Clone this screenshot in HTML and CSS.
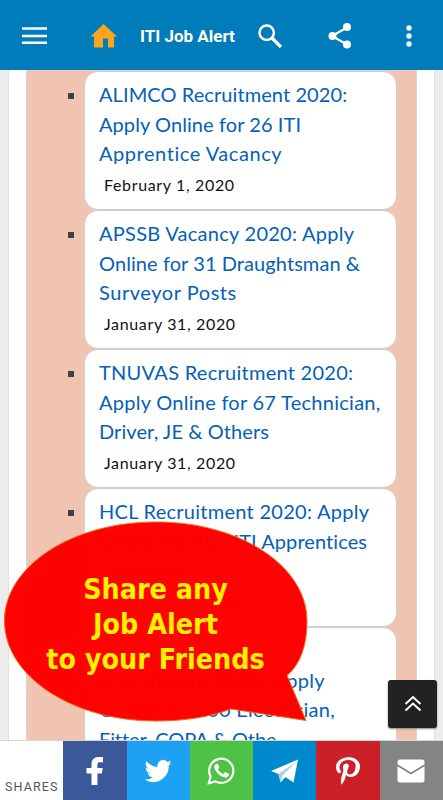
FILE: index.html
```html
<!DOCTYPE html>
<html lang="en">
<head>
    <meta charset="UTF-8">
    <meta name="viewport" content="width=device-width, initial-scale=1.0">
    <title>ITI Job Alert</title>
    <link rel="stylesheet" href="styles.css">
</head>
<body>
    <header class="topbar">
        <svg class="icon-menu" width="26" height="18" viewBox="0 0 26 18"><path d="M0 1.5h25M0 9h25M0 15.7h25" stroke="#fff" stroke-width="2.6"/></svg>
        <svg class="icon-home" width="28" height="24" viewBox="0 0 28 24"><path d="M13.500 0L27 12.5h-3V23.5h-6V14.500h-5V23.5H4V12.5H.5z" fill="#faa51e"/></svg>
        <h1>ITI Job Alert</h1>
        <svg class="icon-search" width="25" height="25" viewBox="0 0 25 25"><circle cx="8.700" cy="8.700" r="7.200" fill="none" stroke="#fff" stroke-width="2.500"/><path d="M14 14L23 23" stroke="#fff" stroke-width="3.2"/></svg>
        <svg class="icon-share" width="24" height="26" viewBox="0 0 24 26"><path d="M19 4.5L4 13l15 8.5" fill="none" stroke="#fff" stroke-width="2.2"/><circle cx="19" cy="4" r="4" fill="#fff"/><circle cx="4.500" cy="13" r="4" fill="#fff"/><circle cx="19" cy="21.5" r="4" fill="#fff"/></svg>
        <svg class="icon-more" width="6" height="22" viewBox="0 0 6 22"><circle cx="3" cy="3" r="2.7" fill="#fff"/><circle cx="3" cy="11" r="2.7" fill="#fff"/><circle cx="3" cy="19" r="2.7" fill="#fff"/></svg>
    </header>

    <main class="page">
        <ul class="jobs">
            <li>
                <a href="#"><span>ALIMCO Recruitment 2020:</span><span>Apply Online for 26 ITI</span><span class="loose">Apprentice Vacancy</span></a>
                <time>February 1, 2020</time>
            </li>
            <li>
                <a href="#"><span class="wide">APSSB Vacancy 2020: Apply</span><span>Online for 31 Draughtsman &amp;</span><span class="loose">Surveyor Posts</span></a>
                <time>January 31, 2020</time>
            </li>
            <li>
                <a href="#"><span class="wide">TNUVAS Recruitment 2020:</span><span class="wide">Apply Online for 67 Technician,</span><span>Driver, JE &amp; Others</span></a>
                <time>January 31, 2020</time>
            </li>
            <li>
                <a href="#"><span class="wide">HCL Recruitment 2020: Apply</span><span>Online for 103 ITI Apprentices</span><span>Vacancies</span></a>
                <time>January 30, 2020</time>
            </li>
            <li>
                <a href="#"><span>Western Railway</span><span class="wide">Recruitment 2020: Apply</span><span class="wide">Online for 200 Electrician,</span><span class="tight">Fitter, COPA &amp; Othe</span></a>
            </li>
        </ul>
    </main>

    <div class="bubble">
        <svg width="306" height="202" viewBox="0 0 306 202"><path d="M152 1C236 1 303 45 303 100C303 123 297 143 283 154.500L302 199.500L227 188C205 196 181 200 152 200C68 200 .5 155 .5 100C.5 45 68 1 152 1Z" fill="#f00" stroke="#f36a12" stroke-width="1"/></svg>
        <p><span>Share any</span><span>Job Alert</span><span>to your Friends</span></p>
    </div>

    <button class="to-top"><svg width="18" height="18" viewBox="0 0 18 18"><path d="M1.500 9L9 2l7.500 7M1.500 15.500L9 8.500l7.500 7" fill="none" stroke="#fff" stroke-width="2"/></svg></button>

    <footer class="sharebar">
        <span class="shares">SHARES</span>
        <a class="facebook" href="#"><svg width="30" height="30" viewBox="0 0 30 30"><path d="M11.500 29V17.500H6.500V12h5V8.500c0-5 2.800-7.500 7.300-7.500H23v5.200h-3c-2 0-2.600.8-2.600 2.500V12H22.700l-.8 5.500h-4.500V29z" fill="#fff"/></svg></a>
        <a class="twitter" href="#"><svg width="28" height="28" viewBox="0 0 24 24"><path d="M23.600 4.900c-.8.400-1.700.7-2.700.8 1-.6 1.700-1.500 2-2.600-.9.500-1.900.9-3 1.100a4.700 4.700 0 0 0-8.100 4.300C7.900 8.300 4.400 6.400 2.100 3.600a4.700 4.700 0 0 0 1.500 6.300c-.8 0-1.500-.2-2.100-.6v.1c0 2.300 1.600 4.200 3.800 4.600-.7.200-1.400.2-2.100.1.600 1.900 2.300 3.200 4.400 3.300A9.500 9.500 0 0 1 .6 19.300a13.400 13.400 0 0 0 20.600-11.900c.9-.7 1.700-1.500 2.400-2.500z" fill="#fff"/></svg></a>
        <a class="whatsapp" href="#"><svg width="29" height="29" viewBox="0 0 24 24"><path d="M17.500 14.400c-.3-.1-1.800-.9-2-1-.3-.1-.5-.1-.7.200-.2.300-.8 1-.9 1.100-.2.200-.3.200-.6.100-.3-.2-1.300-.5-2.400-1.500-.9-.8-1.500-1.800-1.700-2.100-.2-.3 0-.5.100-.6l.5-.5c.1-.2.200-.3.300-.5.100-.2 0-.4 0-.5-.1-.2-.7-1.700-.9-2.200-.2-.6-.5-.5-.7-.5h-.6c-.2 0-.5.100-.8.400-.3.300-1 1-1 2.500s1.100 2.900 1.200 3.100c.2.200 2.100 3.200 5.100 4.500 3 1.200 3 .8 3.600.8.500-.1 1.700-.7 2-1.400.3-.7.300-1.300.2-1.400-.1-.2-.3-.3-.7-.5z" fill="#fff"/><path d="M1.500 22.500L3 17A10 10 0 1 1 7 21z" fill="none" stroke="#fff" stroke-width="1.800"/></svg></a>
        <a class="telegram" href="#"><svg width="30" height="28" viewBox="0 0 30 28"><path d="M1 14L28 2.500l-4.500 23-8-5.500-5 5.500L8.500 17z" fill="#fff"/><path d="M8.500 16.800L26 5 12.500 18.500 10.800 25.500z" fill="#a9cfe9"/></svg></a>
        <a class="pinterest" href="#"><svg width="24" height="28" viewBox="0 0 384 512" preserveAspectRatio="none"><path d="M204 6.500C101.400 6.500 0 74.900 0 185.600 0 256 39.600 296 63.600 296c9.900 0 15.600-27.600 15.600-35.400 0-9.300-23.700-29.100-23.700-67.800 0-80.400 61.200-137.400 140.400-137.400 68.100 0 118.500 38.700 118.500 109.800 0 53.100-21.300 152.700-90.300 152.700-24.900 0-46.200-18-46.200-43.800 0-37.800 26.400-74.400 26.400-113.400 0-66.200-93.900-54.200-93.900 25.800 0 16.800 2.100 35.400 9.600 50.700-13.800 59.400-42 147.900-42 209.100 0 18.900 2.700 37.500 4.500 56.400 3.400 3.800 1.700 3.400 6.900 1.500 50.400-69 48.600-82.500 71.400-172.800 12.300 23.400 44.100 36 69.300 36 106.200 0 153.900-103.500 153.900-196.800C384 71.300 298.200 6.500 204 6.500z" fill="#fff"/></svg></a>
        <a class="email" href="#"><svg width="28" height="24" viewBox="0 0 28 24"><rect x=".5" y=".5" width="27" height="23" rx="2.500" fill="#fff"/><path d="M0 6l14 8.500L28 6" fill="none" stroke="#848484" stroke-width="1.800"/></svg></a>
    </footer>
</body>
</html>
```
FILE: styles.css
```css
* {
    box-sizing: border-box;
}

body {
    margin: 0;
    height: 800px;
    overflow: hidden;
    background: #ededed;
    font-family: Lato, "Open Sans", sans-serif;
}

.topbar {
    display: flex;
    align-items: center;
    height: 70px;
    padding: 2px 31px 0 22px;
    background: #007cba;
}

.topbar h1 {
    width: 97px;
    margin: 0 21px 0 22px;
    font: bold 17px Roboto, sans-serif;
    white-space: nowrap;
    color: #fff;
}

.icon-home {
    margin-left: 42px;
}

.icon-share {
    margin-left: 45px;
}

.icon-more {
    margin-left: auto;
}

.page {
    height: 730px;
    margin: 0 8px;
    padding: 0 17px;
    overflow: hidden;
    background: #fff;
    border: solid #e2e2e2;
    border-width: 0 1px;
}

.jobs {
    margin: 0;
    padding: 0 19px 0 57px;
    list-style: none;
    background: #f1c4b2;
    border: solid #d6d6d6;
    border-width: 0 1px;
}

/* bottom edge of the card scrolled off above */
.jobs::before {
    content: "";
    display: block;
    height: 1px;
    margin: 0 12px;
    background: #cdcfd0;
}

.jobs li {
    position: relative;
    height: 139px;
    padding: 8px 0 0 14px;
    background: #fff;
    border: 1px solid #cdcfd0;
    border-radius: 14px;
}

.jobs li::before {
    content: "";
    position: absolute;
    left: -17px;
    top: 21px;
    width: 6px;
    height: 6px;
    background: #3d4145;
}

.jobs a {
    display: block;
    color: #0560b8;
    font-size: 20px;
    line-height: 29.5px;
    text-decoration: none;
    white-space: nowrap;
}

.jobs a span {
    display: block;
    letter-spacing: .08px;
}

.jobs a .tight {
    letter-spacing: -.1px;
}

.jobs a .wide {
    letter-spacing: .27px;
}

.jobs a .loose {
    letter-spacing: .55px;
}

.jobs time {
    display: block;
    padding: 3px 0 0 5px;
    font-size: 16px;
    line-height: 26px;
    letter-spacing: .65px;
    color: #111;
}

.jobs li:last-child {
    height: 200px;
}

.bubble {
    position: absolute;
    left: 4px;
    top: 521px;
}

.bubble svg {
    display: block;
    opacity: .99;
}

.bubble p {
    position: absolute;
    inset: 51px 3px auto 0;
    margin: 0;
    font: bold 28.4px/35px "DejaVu Sans Condensed", "DejaVu Sans", sans-serif;
    text-align: center;
    color: #fff000;
    white-space: nowrap;
}

.bubble p span {
    display: block;
}

.to-top {
    position: absolute;
    left: 388px;
    top: 680px;
    width: 49px;
    height: 48px;
    padding: 3px 0 0;
    background: #222;
    border: 0;
    border-radius: 3px;
    box-shadow: 0 1px 2px #888;
}

.sharebar {
    position: absolute;
    left: 0;
    right: 0;
    bottom: 0;
    display: grid;
    grid-template-columns: 63.3px repeat(6, 63.3px);
    height: 60px;
    overflow: hidden;
    background: #fff;
    border-top: 1px solid #d4d4d4;
}

.sharebar a {
    display: flex;
    align-items: center;
    justify-content: center;
}

.shares {
    align-self: end;
    padding: 0 0 4px 5px;
    font: 12.5px/18px Roboto, sans-serif;
    letter-spacing: 1.1px;
    color: #555;
}

.facebook { background: #3b5998; }
.twitter { background: #1da1f2; }
.whatsapp { background: #4dc247; }
.telegram { background: #0088cc; }
.pinterest { background: #cb2027; }
.email { background: #848484; }
```
